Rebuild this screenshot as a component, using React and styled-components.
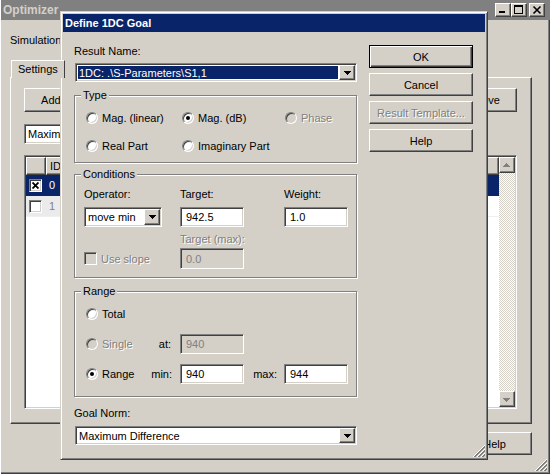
import React from "react";
import styled, { createGlobalStyle, css } from "styled-components";

const GlobalStyle = createGlobalStyle`
  html, body { margin: 0; padding: 0; background: #d4d0c8; }
  body {
    font-family: "Liberation Sans", Arial, sans-serif;
    font-size: 11px;
    color: #000;
  }
`;

const raised = css`
  border: 1px solid;
  border-color: #fff #404040 #404040 #fff;
  box-shadow: inset -1px -1px 0 #808080;
`;

const sunken = css`
  border: 1px solid;
  border-color: #808080 #fff #fff #808080;
  box-shadow: inset 1px 1px 0 #404040, inset -1px -1px 0 #d4d0c8;
`;

const greyed = css`
  color: #808080;
  text-shadow: 1px 1px 0 #fff;
`;

const Desktop = styled.div`
  position: relative;
  width: 550px;
  height: 474px;
  overflow: hidden;
`;

/* ---------- background window ---------- */

const AppWindow = styled.div`
  position: relative;
  box-sizing: border-box;
  width: 550px;
  height: 474px;
  display: flex;
  flex-direction: column;
  background: #d4d0c8;
  border-left: 1px solid #fff;
  box-shadow: inset -1px -1px 0 #404040, inset -2px -2px 0 #808080;
`;

const TitleBar = styled.div`
  height: 20px;
  display: flex;
  align-items: center;
  padding: 0 5px 0 2px;
  background: ${(p) => (p.$active ? "#0a246a" : "#808080")};
  color: ${(p) => (p.$active ? "#fff" : "#d4d0c8")};
  font-weight: bold;
  font-size: ${(p) => (p.$active ? 11 : 12)}px;
`;

const TitleText = styled.span`
  flex: 1;
  white-space: nowrap;
`;

const CaptionButton = styled.div`
  box-sizing: border-box;
  width: 16px;
  height: 14px;
  margin-left: ${(p) => p.$gap || 0}px;
  background: #d4d0c8;
  ${raised};
  display: flex;
  align-items: center;
  justify-content: center;
`;

const WinBody = styled.div`
  flex: 1;
  display: flex;
  flex-direction: column;
  padding-left: 9px;
`;

const PlainLabel = styled.div`
  line-height: 13px;
  margin-top: ${(p) => p.$mt || 0}px;
  white-space: nowrap;
`;

const TabStrip = styled.div`
  margin-top: 13px;
  height: 17px;
  display: flex;
`;

const Tab = styled.div`
  position: relative;
  z-index: 1;
  margin-left: 1px;
  margin-bottom: -1px;
  padding: 0 6px;
  line-height: 17px;
  background: #d4d0c8;
  border-top: 1px solid #fff;
  border-left: 1px solid #fff;
  border-right: 1px solid #404040;
`;

const TabPanel = styled.div`
  box-sizing: border-box;
  width: 522px;
  height: 347px;
  ${raised};
  padding: 10px 14px 0 13px;
  display: flex;
  flex-direction: column;
`;

const ButtonRow = styled.div`
  display: flex;
  justify-content: space-between;
`;

const PushButton = styled.div`
  box-sizing: border-box;
  width: ${(p) => p.$w}px;
  height: ${(p) => p.$h || 23}px;
  display: flex;
  align-items: center;
  justify-content: center;
  background: #d4d0c8;
  white-space: nowrap;
  ${(p) =>
    p.$default
      ? css`
          border: 1px solid #000;
          box-shadow: inset 1px 1px 0 #fff, inset -1px -1px 0 #404040,
            inset -2px -2px 0 #808080;
        `
      : raised};
  ${(p) => p.$disabled && greyed};
`;

const ListView = styled.div`
  margin-top: 11px;
  height: 254px;
  box-sizing: border-box;
  ${sunken};
  padding: 1px;
  background: #fff;
  display: flex;
`;

const ListMain = styled.div`
  flex: 1;
  display: flex;
  flex-direction: column;
`;

const ListHeader = styled.div`
  display: flex;
  height: 18px;
`;

const HeaderCell = styled.div`
  box-sizing: border-box;
  width: ${(p) => (p.$w ? `${p.$w}px` : "auto")};
  flex: ${(p) => (p.$w ? "none" : 1)};
  background: #d4d0c8;
  ${raised};
  padding-left: 3px;
  line-height: 16px;
`;

const ListRow = styled.div`
  display: flex;
  height: 20px;
  background: ${(p) => (p.$selected ? "#0a246a" : "#fff")};
  color: ${(p) => (p.$selected ? "#fff" : "#808080")};
  border-bottom: 1px solid ${(p) => (p.$selected ? "#0a246a" : "#f0f0f0")};
`;

const ListCell = styled.div`
  width: ${(p) => (p.$w ? `${p.$w}px` : "auto")};
  flex: ${(p) => (p.$w ? "none" : 1)};
  display: flex;
  align-items: center;
  padding-left: ${(p) => p.$pl || 0}px;
  box-sizing: border-box;
  background: ${(p) => p.$bg || "transparent"};
`;

const Scrollbar = styled.div`
  width: 16px;
  display: flex;
  flex-direction: column;
`;

const ScrollButton = styled.div`
  box-sizing: border-box;
  height: 16px;
  background: #d4d0c8;
  ${raised};
  display: flex;
  align-items: center;
  justify-content: center;
`;

const ScrollTrack = styled.div`
  flex: 1;
  background: repeating-conic-gradient(#fff 0 25%, #d4d0c8 0 50%) 0 0 / 2px 2px;
`;

const Footer = styled.div`
  margin-top: 8px;
  padding-right: 18px;
  display: flex;
  justify-content: flex-end;
`;

const Grip = styled.div`
  position: absolute;
  right: ${(p) => p.$off}px;
  bottom: ${(p) => p.$off}px;
  width: 12px;
  height: 12px;
`;

/* ---------- dialog ---------- */

const Dialog = styled.div`
  position: absolute;
  left: 60px;
  top: 11px;
  width: 428px;
  height: 449px;
  box-sizing: border-box;
  padding: 2px;
  background: #d4d0c8;
  border: 1px solid;
  border-color: #d4d0c8 #404040 #404040 #d4d0c8;
  box-shadow: inset 1px 1px 0 #fff, inset -1px -1px 0 #808080;
  display: flex;
  flex-direction: column;
`;

const DialogTitle = styled.div`
  height: 18px;
  line-height: 18px;
  padding-left: 2px;
  background: #0a246a;
  color: #fff;
  font-weight: bold;
  font-size: 11px;
`;

const DialogBody = styled.div`
  display: flex;
  gap: 11px;
  padding: 13px 0 0 11px;
`;

const LeftColumn = styled.div`
  width: 284px;
  display: flex;
  flex-direction: column;
`;

const RightColumn = styled.div`
  width: 104px;
  display: flex;
  flex-direction: column;
  gap: 5px;
`;

const Combo = styled.div`
  box-sizing: border-box;
  width: ${(p) => (p.$w ? `${p.$w}px` : "auto")};
  height: ${(p) => p.$h || 19}px;
  margin: ${(p) => p.$m || "0"};
  ${sunken};
  padding: 1px;
  background: #fff;
  display: flex;
`;

const ComboText = styled.div`
  flex: 1;
  overflow: hidden;
  white-space: nowrap;
  display: flex;
  align-items: center;
  padding-left: ${(p) => (p.$selected ? 1 : 2)}px;
  margin: ${(p) => (p.$selected ? "1px" : 0)};
  background: ${(p) => (p.$selected ? "#0a246a" : "transparent")};
  color: ${(p) => (p.$selected ? "#fff" : "#000")};
`;

const DropButton = styled.div`
  box-sizing: border-box;
  width: 16px;
  background: #d4d0c8;
  ${raised};
  display: flex;
  align-items: center;
  justify-content: center;
`;

const Group = styled.fieldset`
  box-sizing: border-box;
  width: 283px;
  margin: ${(p) => p.$mt}px 0 0;
  padding: 0;
  min-inline-size: 0;
  border: 1px solid #808080;
  box-shadow: inset 1px 1px 0 #fff, 1px 1px 0 #fff;
`;

const GroupTitle = styled.legend`
  margin-left: 6px;
  padding: 0 2px;
  line-height: 13px;
  background: #d4d0c8;
`;

const TypeGrid = styled.div`
  display: grid;
  grid-template-columns: 96px 103px 1fr;
  grid-auto-rows: 14px;
  row-gap: 14px;
  padding: 9px 0 9px 11px;
`;

const CondGrid = styled.div`
  display: grid;
  grid-template-columns: 96px 104px 1fr;
  grid-template-rows: 19px 26px 15px 21px;
  padding: 7px 0 8px 9px;
  align-items: start;
`;

const RangeGrid = styled.div`
  display: grid;
  grid-template-columns: 66px 28px 64px 40px 64px;
  grid-auto-rows: 20px;
  row-gap: 10px;
  padding: 6px 0 12px 11px;
  align-items: center;
`;

const Caption = styled.div`
  line-height: 13px;
  white-space: nowrap;
  ${(p) => p.$disabled && greyed};
`;

const InlineCaption = styled.div`
  justify-self: end;
  padding-right: ${(p) => p.$pr}px;
  white-space: nowrap;
  ${(p) => p.$disabled && greyed};
`;

const Field = styled.div`
  box-sizing: border-box;
  width: ${(p) => p.$w || 64}px;
  height: ${(p) => p.$h || 20}px;
  ${sunken};
  background: ${(p) => (p.$disabled ? "#d4d0c8" : "#fff")};
  color: ${(p) => (p.$disabled ? "#808080" : "#000")};
  padding-left: 5px;
  display: flex;
  align-items: center;
  white-space: nowrap;
`;

const Choice = styled.div`
  display: flex;
  align-items: center;
  gap: 4px;
  white-space: nowrap;
  ${(p) => p.$disabled && greyed};
  align-self: center;
`;

const RadioDot = styled.span`
  box-sizing: border-box;
  flex: none;
  width: 12px;
  height: 12px;
  border-radius: 50%;
  border: 1px solid;
  border-color: #808080 #fff #fff #808080;
  box-shadow: inset 1px 1px 0 #404040, inset -1px -1px 0 #d4d0c8;
  background: ${(p) => (p.$disabled ? "#d4d0c8" : "#fff")};
  display: flex;
  align-items: center;
  justify-content: center;
  &::after {
    content: "";
    width: 4px;
    height: 4px;
    border-radius: 50%;
    background: ${(p) => (p.$checked ? "#000" : "transparent")};
  }
`;

const CheckBox = styled.span`
  box-sizing: border-box;
  flex: none;
  width: 13px;
  height: 13px;
  ${sunken};
  background: ${(p) => (p.$disabled ? "#d4d0c8" : "#fff")};
  display: flex;
  align-items: center;
  justify-content: center;
`;

const DownArrow = ({ color = "#000" }) => (
  <svg width="7" height="4" shapeRendering="crispEdges">
    <path d="M0 0H7V1H6V2H5V3H4V4H3V3H2V2H1V1H0Z" fill={color} />
  </svg>
);

const ScrollArrow = ({ up }) => (
  <svg width="8" height="5" shapeRendering="crispEdges">
    <g transform={up ? "" : "translate(0 5) scale(1 -1)"}>
      <path d="M3 0H4V1H5V2H6V3H7V4H0V3H1V2H2V1H3Z" fill="#808080" />
    </g>
  </svg>
);

const ResizeGrip = () => (
  <svg width="12" height="12">
    {[0, 4, 8].map((o) => (
      <g key={o}>
        <line x1={o} y1="12" x2="12" y2={o} stroke="#fff" />
        <line x1={o + 1} y1="12" x2="12" y2={o + 1} stroke="#808080" />
        <line x1={o + 2} y1="12" x2="12" y2={o + 2} stroke="#808080" />
      </g>
    ))}
  </svg>
);

const Radio = ({ children, checked, disabled }) => (
  <Choice $disabled={disabled}>
    <RadioDot $checked={checked} $disabled={disabled} />
    {children}
  </Choice>
);

const DropDown = ({ text, selected, w, m, h }) => (
  <Combo $w={w} $m={m} $h={h}>
    <ComboText $selected={selected}>{text}</ComboText>
    <DropButton>
      <DownArrow />
    </DropButton>
  </Combo>
);

export default function App() {
  return (
    <Desktop>
      <GlobalStyle />
      <AppWindow>
        <TitleBar>
          <TitleText>Optimizer</TitleText>
          <CaptionButton>
            <svg width="14" height="12" shapeRendering="crispEdges">
              <rect x="3" y="7" width="6" height="2" fill="#000" />
            </svg>
          </CaptionButton>
          <CaptionButton>
            <svg width="14" height="12" shapeRendering="crispEdges">
              <path d="M2 1H11V10H2ZM3 3V9H10V3Z" fill="#000" fillRule="evenodd" />
            </svg>
          </CaptionButton>
          <CaptionButton $gap={2}>
            <svg width="14" height="12">
              <path d="M3.5 2.5l7 7M10.5 2.5l-7 7" stroke="#000" strokeWidth="1.6" />
            </svg>
          </CaptionButton>
        </TitleBar>
        <WinBody>
          <PlainLabel $mt={14}>Simulation</PlainLabel>
          <TabStrip>
            <Tab>Settings</Tab>
          </TabStrip>
          <TabPanel>
            <ButtonRow>
              <PushButton $w={80} $h={24}>Add Goal</PushButton>
              <PushButton $w={75} $h={24}>Remove</PushButton>
            </ButtonRow>
            <DropDown text="Maximum Difference" w={200} h={20} m="12px 0 0" />
            <ListView>
              <ListMain>
                <ListHeader>
                  <HeaderCell $w={20} />
                  <HeaderCell $w={60}>ID</HeaderCell>
                  <HeaderCell $w={140} />
                  <HeaderCell $w={140} />
                  <HeaderCell />
                </ListHeader>
                <ListRow $selected>
                  <ListCell $w={20} $pl={3}>
                    <CheckBox>
                      <svg width="7" height="7">
                        <path d="M0.5 0.5l6 6M6.5 0.5l-6 6" stroke="#000" strokeWidth="1.8" />
                      </svg>
                    </CheckBox>
                  </ListCell>
                  <ListCell $w={60} $pl={3}>0</ListCell>
                  <ListCell />
                </ListRow>
                <ListRow>
                  <ListCell $w={20} $pl={3} $bg="#ebebeb">
                    <CheckBox />
                  </ListCell>
                  <ListCell $w={60} $pl={3} $bg="#ebebeb">1</ListCell>
                  <ListCell />
                </ListRow>
              </ListMain>
              <Scrollbar>
                <ScrollButton>
                  <ScrollArrow up />
                </ScrollButton>
                <ScrollTrack />
                <ScrollButton>
                  <ScrollArrow />
                </ScrollButton>
              </Scrollbar>
            </ListView>
          </TabPanel>
          <Footer>
            <PushButton $w={75}>Help</PushButton>
          </Footer>
        </WinBody>
        <Grip $off={3}>
          <ResizeGrip />
        </Grip>
      </AppWindow>

      <Dialog>
        <DialogTitle>Define 1DC Goal</DialogTitle>
        <DialogBody>
          <LeftColumn>
            <Caption>Result Name:</Caption>
            <DropDown text="1DC: .\S-Parameters\S1,1" selected w={282} m="5px 0 0 1px" />

            <Group $mt={7}>
              <GroupTitle>Type</GroupTitle>
              <TypeGrid>
                <Radio>Mag. (linear)</Radio>
                <Radio checked>Mag. (dB)</Radio>
                <Radio disabled>Phase</Radio>
                <Radio>Real Part</Radio>
                <Radio>Imaginary Part</Radio>
              </TypeGrid>
            </Group>

            <Group $mt={5}>
              <GroupTitle>Conditions</GroupTitle>
              <CondGrid>
                <Caption>Operator:</Caption>
                <Caption>Target:</Caption>
                <Caption>Weight:</Caption>
                <DropDown text="move min" w={78} h={20} />
                <Field>942.5</Field>
                <Field>1.0</Field>
                <span />
                <Caption $disabled>Target (max):</Caption>
                <span />
                <Choice $disabled>
                  <CheckBox $disabled />
                  Use slope
                </Choice>
                <Field $disabled $h={21}>0.0</Field>
                <span />
              </CondGrid>
            </Group>

            <Group $mt={7}>
              <GroupTitle>Range</GroupTitle>
              <RangeGrid>
                <Radio>Total</Radio>
                <span />
                <span />
                <span />
                <span />
                <Radio disabled>Single</Radio>
                <InlineCaption $pr={9}>at:</InlineCaption>
                <Field $disabled>940</Field>
                <span />
                <span />
                <Radio checked>Range</Radio>
                <InlineCaption $pr={8}>min:</InlineCaption>
                <Field>940</Field>
                <InlineCaption $pr={7}>max:</InlineCaption>
                <Field>944</Field>
              </RangeGrid>
            </Group>

            <PlainLabel $mt={10}>Goal Norm:</PlainLabel>
            <DropDown text="Maximum Difference" w={282} m="6px 0 0 1px" />
          </LeftColumn>

          <RightColumn>
            <PushButton $w={104} $default>OK</PushButton>
            <PushButton $w={104}>Cancel</PushButton>
            <PushButton $w={104} $disabled>Result Template...</PushButton>
            <PushButton $w={104}>Help</PushButton>
          </RightColumn>
        </DialogBody>
        <Grip $off={2}>
          <ResizeGrip />
        </Grip>
      </Dialog>
    </Desktop>
  );
}
